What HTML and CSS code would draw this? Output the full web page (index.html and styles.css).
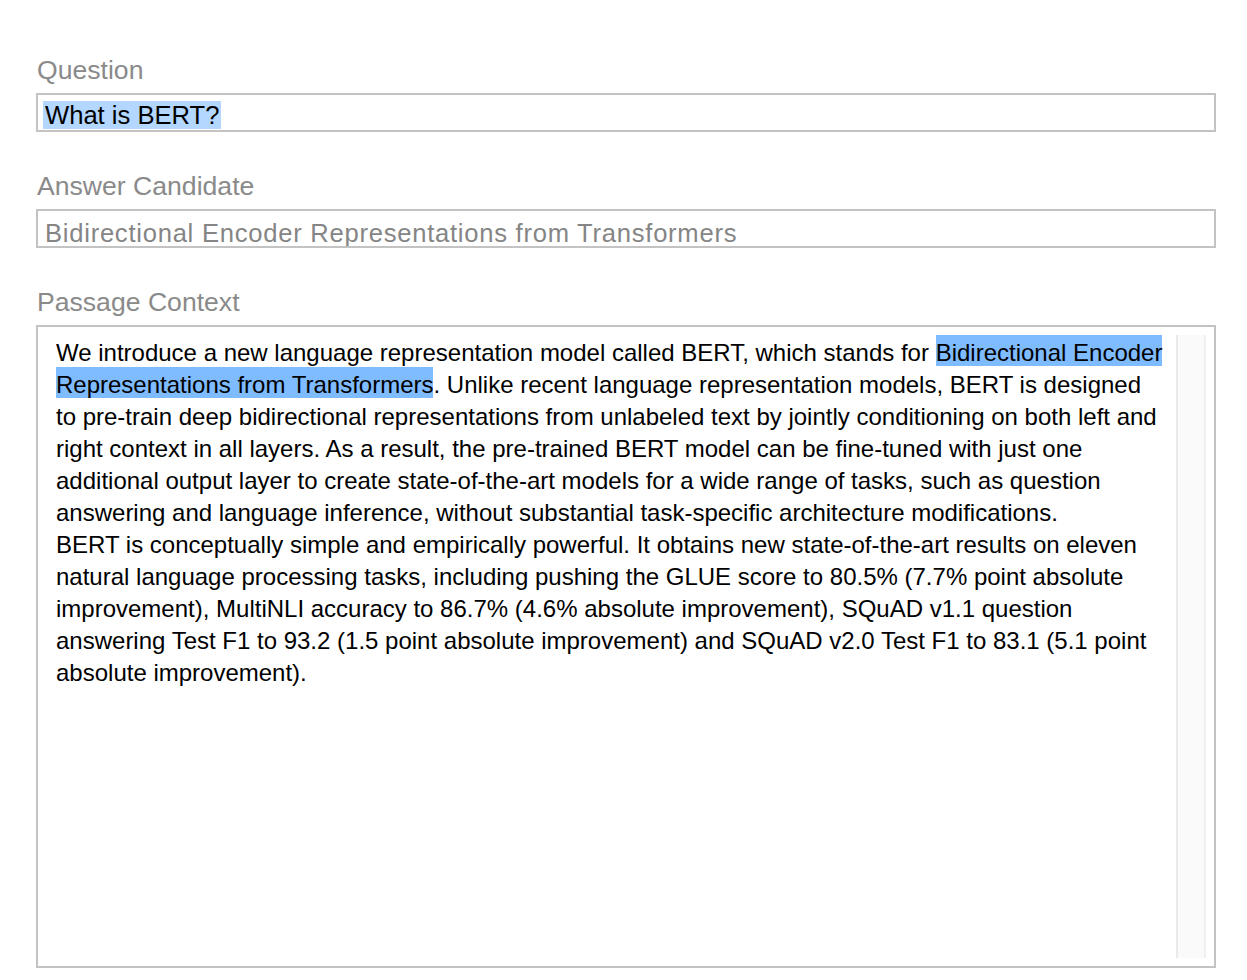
FILE: index.html
```html
<!DOCTYPE html>
<html lang="en">
<head>
<meta charset="utf-8">
<title>Question Answering</title>
<link rel="stylesheet" href="styles.css">
</head>
<body>
<main class="form">
  <section class="field">
    <label class="field-label">Question</label>
    <div class="input input-question"><span class="sel-soft">What is BERT?</span></div>
  </section>
  <section class="field">
    <label class="field-label">Answer Candidate</label>
    <div class="input input-muted">Bidirectional Encoder Representations from Transformers</div>
  </section>
  <section class="field">
    <label class="field-label">Passage Context</label>
    <div class="passage">
      <div class="passage-text">We introduce a new language representation model called BERT, which stands for <span class="sel">Bidirectional Encoder <br>Representations from Transformers</span>. Unlike recent language representation models, BERT is designed<br>to pre-train deep bidirectional representations from unlabeled text by jointly conditioning on both left and<br>right context in all layers. As a result, the pre-trained BERT model can be fine-tuned with just one<br>additional output layer to create state-of-the-art models for a wide range of tasks, such as question<br>answering and language inference, without substantial task-specific architecture modifications.<br>BERT is conceptually simple and empirically powerful. It obtains new state-of-the-art results on eleven<br>natural language processing tasks, including pushing the GLUE score to 80.5% (7.7% point absolute<br>improvement), MultiNLI accuracy to 86.7% (4.6% absolute improvement), SQuAD v1.1 question<br>answering Test F1 to 93.2 (1.5 point absolute improvement) and SQuAD v2.0 Test F1 to 83.1 (5.1 point<br>absolute improvement).</div>
      <div class="scroll-track"></div>
    </div>
  </section>
</main>
</body>
</html>
```

FILE: styles.css
```css
html, body {
  margin: 0;
  padding: 0;
  background: #ffffff;
}

body {
  font-family: "Liberation Sans", Arial, sans-serif;
  color: #000000;
}

.form {
  width: 1180px;
  padding: 54px 0 0 36px;
  display: flex;
  flex-direction: column;
  gap: 38px;
}

.field {
  display: flex;
  flex-direction: column;
  gap: 7px;
}

.field-label {
  display: block;
  font-size: 26.6px;
  line-height: 32px;
  height: 32px;
  color: #8a8a8a;
  padding-left: 1px;
}

.input {
  box-sizing: border-box;
  height: 39px;
  border: 2px solid #c3c3c3;
  padding: 5px 7px 0;
  font-size: 25.6px;
  line-height: 30px;
  white-space: nowrap;
  overflow: hidden;
}

.input-question {
  padding-left: 5px;
}

.input-muted {
  color: #858585;
  padding-top: 7px;
  letter-spacing: 0.74px;
}

.sel-soft {
  background: #b4d7ff;
  padding: 0 2px;
}

.passage {
  box-sizing: border-box;
  height: 643px;
  border: 2px solid #c3c3c3;
  padding: 8px;
  display: flex;
}

.passage-text {
  flex: 1;
  padding: 2px 10px 0;
  font-size: 24px;
  line-height: 32px;
  white-space: nowrap;
  overflow: hidden;
}

.sel {
  background: #7fbbff;
  padding-top: 4px;
}

.scroll-track {
  box-sizing: border-box;
  width: 30px;
  flex: none;
  background: #fafafa;
  border-left: 2px solid #e9e9e9;
  border-right: 2px solid #f0f0f0;
}
```
